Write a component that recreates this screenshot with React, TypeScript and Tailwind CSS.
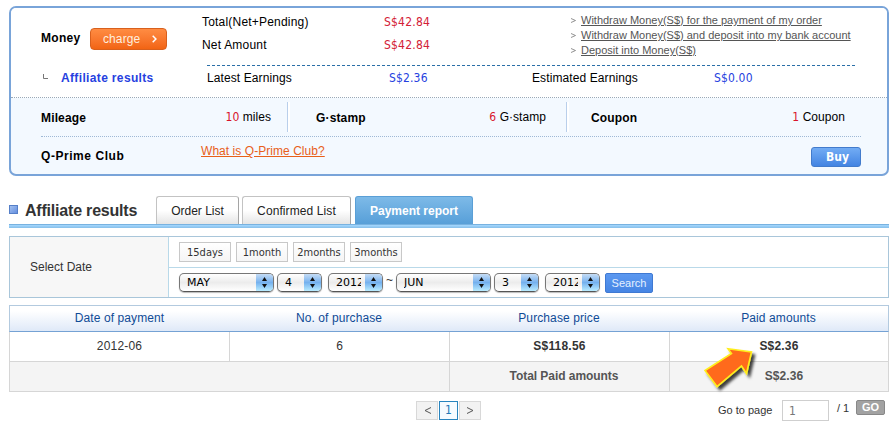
import type { ReactNode } from 'react';

const tahoma = "font-['DejaVu_Sans_Condensed','DejaVu_Sans',sans-serif]";

function MacSelect({ value, className }: { value: string; className: string }) {
  return (
    <div className={`flex h-[19px] overflow-hidden rounded-[5px] border border-[#777] border-b-[#555] bg-linear-to-b from-white via-[#ececec] to-white shadow-[0_1px_1px_#bbb] ${className}`}>
      <span className="mr-[4px] ml-[7px] min-w-0 flex-1 overflow-hidden font-['DejaVu_Sans',sans-serif] text-[11px] leading-[17px] whitespace-nowrap text-black">
        {value}
      </span>
      <span className="flex w-[17px] shrink-0 items-center justify-center bg-linear-to-b from-[#c5dcf5] via-[#75b1ee] to-[#b9ecff]">
        <svg width="7" height="11" viewBox="0 0 7 11" fill="#111">
          <path d="M3.5 0 6 4H1zM3.5 11 1 7h5z" />
        </svg>
      </span>
    </div>
  );
}

function Tab({ children, active, className }: { children: ReactNode; active?: boolean; className: string }) {
  return (
    <div
      className={`h-7 rounded-t-[3px] border border-b-0 text-center text-[12px] leading-[29px] whitespace-nowrap ${
        active
          ? 'border-[#5a9fd6] bg-linear-to-b from-[#7dbae8] to-[#579fd8] font-bold text-white'
          : 'border-[#c3c3c3] border-r-[#a5a5a5] bg-linear-to-b from-white from-50% to-[#e5e5e5] text-[#222]'
      } ${className}`}
    >
      {children}
    </div>
  );
}

function MoneyLink({ children }: { children: ReactNode }) {
  return (
    <li className="flex h-[15px] items-center">
      <svg className="mr-[5px]" width="5" height="5" viewBox="0 0 5 5" fill="none" stroke="#777" strokeWidth="0.8">
        <path d="M0 .5 4.5 2.5 0 4.5" />
      </svg>
      <a className="text-[11px] leading-[15px] whitespace-nowrap text-[#555] underline underline-offset-1">{children}</a>
    </li>
  );
}

function Stat({ label, count, unit, className }: { label: string; count: string; unit: string; className: string }) {
  return (
    <div className={`flex h-[30px] items-center justify-between ${className}`}>
      <span className="pt-[2px] text-[12px] font-bold tracking-[0.15px]">{label}</span>
      <span className="text-[12px] tracking-[0.05px]">
        <span className={`text-[#d8142d] ${tahoma}`}>{count}</span> {unit}
      </span>
    </div>
  );
}

function SummaryBox() {
  return (
    <section className="flex h-[170px] flex-col rounded-[7px] border-2 border-[#79a4d9] bg-[#f3f9ff] text-black">
      <div className="flex h-[90px] rounded-t-[5px] border-b border-dotted border-[#9aa9b8] bg-white pl-[30px]">
        <div className="w-[161px]">
          <div className="mt-[20px] flex h-[22px] items-center">
            <span className="w-[49px] pb-[2px] text-[12px] font-bold tracking-[0.3px]">Money</span>
            <button className="flex h-[22px] w-[77px] items-center justify-between rounded-[4px] border border-[#d8601d] bg-linear-to-b from-[#ff8c42] to-[#f26412] pr-[9px] pl-[12px] text-[12px] tracking-[0.1px] text-[#ffeede]">
              charge
              <svg width="5" height="8" viewBox="0 0 5 8" fill="none" stroke="#fff" strokeWidth="1.5">
                <path d="m.7.7 3.2 3.3L.7 7.3" />
              </svg>
            </button>
          </div>
          <div className="mt-[19px] flex h-[18px] items-center">
            <svg className="mb-[3px] ml-[2px]" width="18" height="6" viewBox="0 0 18 6" fill="none" stroke="#777">
              <path d="M.5 0v4.5H5" />
            </svg>
            <span className="text-[12px] font-bold tracking-[0.35px] text-[#263fe0]">Affiliate results</span>
          </div>
        </div>
        <div className="w-[655px]">
          <div className="flex h-[57px]">
            <div className="w-[182px] pt-[3px] text-[12px] leading-[23px] tracking-[0.2px]">
              <p>Total(Net+Pending)</p>
              <p>Net Amount</p>
            </div>
            <div className={`w-[187px] pt-[3px] text-[12px] leading-[23px] tracking-[0.2px] text-[#d32035] ${tahoma}`}>
              <p>S$42.84</p>
              <p>S$42.84</p>
            </div>
            <ul className="pt-[5px]">
              <MoneyLink>Withdraw Money(S$) for the payment of my order</MoneyLink>
              <MoneyLink>Withdraw Money(S$) and deposit into my bank account</MoneyLink>
              <MoneyLink>Deposit into Money(S$)</MoneyLink>
            </ul>
          </div>
          <div className="ml-[5px] h-px bg-[repeating-linear-gradient(90deg,#2a6fa8_0_3px,transparent_3px_5px)]" />
          <div className="ml-[5px] flex h-[24px] items-center text-[12px] tracking-[0.1px]">
            <span className="w-[182px]">Latest Earnings</span>
            <span className={`w-[143px] pb-px tracking-[0.15px] text-[#263fe0] ${tahoma}`}>S$2.36</span>
            <span className="w-[182px]">Estimated Earnings</span>
            <span className={`pb-px tracking-[0.15px] text-[#263fe0] ${tahoma}`}>S$0.00</span>
          </div>
        </div>
      </div>
      <div className="mr-[26px] ml-[30px] flex h-[39px] items-center border-b border-dotted border-[#9fb9d6]">
        <Stat label="Mileage" count="10" unit="miles" className="w-[246px] pr-[16px]" />
        <Stat label="G·stamp" count="6" unit="G·stamp" className="w-[279px] border-l border-[#b9cfeb] pr-[20px] pl-[28px] shadow-[inset_2px_0_#fff]" />
        <Stat label="Coupon" count="1" unit="Coupon" className="flex-1 border-l border-[#b9cfeb] pr-[16px] pl-[24px] shadow-[inset_2px_0_#fff]" />
      </div>
      <div className="mr-[26px] ml-[30px] flex items-start">
        <span className="w-[160px] pt-[10px] text-[12px] leading-[18px] font-bold tracking-[0.6px]">
          <span className="tracking-[0.55px]">Q-Prime Club</span>
        </span>
        <a className="flex-1 pt-[5px] text-[12px] leading-[18px] tracking-[0.05px] text-[#e8601a] underline underline-offset-1">What is Q-Prime Club?</a>
        <button className="mt-[10px] h-5 w-[50px] rounded-[3px] border border-[#427bcc] bg-linear-to-b from-[#72acf4] to-[#4384e2] pl-[3px] font-['DejaVu_Sans_Condensed','DejaVu_Sans',sans-serif] text-[12px] leading-[18px] font-bold text-white">
          Buy
        </button>
      </div>
    </section>
  );
}

function DateFilter() {
  return (
    <section className="mt-2 flex h-[62px] border border-[#a9c6da]">
      <div className="w-[159px] border-r border-[#b9d9e9] bg-[#f7f7f7] pl-5 text-[12px] leading-[60px]">Select Date</div>
      <div className="flex-1">
        <div className="flex h-[31px] gap-[5px] border-b border-[#b9d9e9] pt-[5px] pl-[10px]">
          {['15days', '1month', '2months', '3months'].map((range) => (
            <button key={range} className={`h-5 w-[52px] border border-[#c8c8c8] bg-linear-to-b from-white to-[#f5f5f5] text-[11px] leading-[20px] whitespace-nowrap text-[#333] ${tahoma}`}>
              {range}
            </button>
          ))}
        </div>
        <div className="flex h-[29px] items-start pt-[5px] pl-[10px]">
          <MacSelect value="MAY" className="w-[95px]" />
          <MacSelect value="4" className="ml-[3px] w-[45px]" />
          <MacSelect value="2012" className="ml-[6px] w-[55px]" />
          <span className="w-[13px] text-center text-[12px] leading-[15px]">~</span>
          <MacSelect value="JUN" className="w-[95px]" />
          <MacSelect value="3" className="ml-[3px] w-[45px]" />
          <MacSelect value="2012" className="ml-[6px] w-[55px]" />
          <button className="ml-[5px] h-5 w-[48px] rounded-[2px] border border-[#3f79d2] bg-linear-to-b from-[#5b98f0] to-[#4585e4] text-[11px] leading-[18px] text-[#e4f0ff]">
            Search
          </button>
        </div>
      </div>
    </section>
  );
}

function PaymentTable() {
  return (
    <section className="mt-[7px] text-center text-[12px]">
      <div className="grid h-[27px] grid-cols-[219px_220px_220px_219px] border border-b-[#75a2d4] border-[#b3cadf] bg-linear-to-b from-white from-20% to-[#dfe9f8] leading-[25px] tracking-[0.1px] text-[#104b96]">
        <span>Date of payment</span>
        <span>No. of purchase</span>
        <span>Purchase price</span>
        <span>Paid amounts</span>
      </div>
      <div className="grid h-[30px] grid-cols-[220px_220px_220px_218px] divide-x divide-[#d6d6d6] border-x border-b border-[#d6d6d6] leading-[28px]">
        <span className="tracking-[0.2px]">2012-06</span>
        <span>6</span>
        <span className="tracking-[0.2px] font-bold">S$118.56</span>
        <span className="tracking-[0.2px] font-bold">S$2.36</span>
      </div>
      <div className="grid h-[30px] grid-cols-[440px_220px_218px] divide-x divide-[#d6d6d6] border-x border-b border-[#d6d6d6] bg-[#f4f4f4] leading-[29px] font-bold text-[#555]">
        <span />
        <span className="pl-[9px] tracking-[-0.05px]">Total Paid amounts</span>
        <span className="pl-[10px] tracking-[0.1px]">S$2.36</span>
      </div>
    </section>
  );
}

function Pager() {
  return (
    <footer className="flex pt-[8px]">
      <div className="mt-px ml-[407px] flex w-[302px] gap-px text-center text-[12px] leading-[17px]">
        <span className="flex h-[19px] w-[22px] items-center justify-center border border-[#d8d8d8] bg-[#f2f2f2]">
          <svg width="7" height="7" viewBox="0 0 7 7" fill="none" stroke="#555">
            <path d="M7 .5 1 3.5l6 3" />
          </svg>
        </span>
        <span className={`h-[19px] w-[19px] border border-[#2884be] bg-[#f6fbff] text-[#2479b7] ${tahoma}`}>1</span>
        <span className="flex h-[19px] w-[22px] items-center justify-center border border-[#d8d8d8] bg-[#f2f2f2]">
          <svg width="7" height="7" viewBox="0 0 7 7" fill="none" stroke="#555">
            <path d="m0 .5 6 3-6 3" />
          </svg>
        </span>
      </div>
      <span className="w-[64px] pt-[2px] text-[11px] leading-[16px] whitespace-nowrap">Go to page</span>
      <span className={`h-[21px] w-[47px] border border-[#cfcfcf] pl-[6px] text-[12px] leading-[21px] text-[#777] ${tahoma}`}>1</span>
      <span className="w-[27px] pt-px pl-[8px] text-[11px] leading-[15px]">/ 1</span>
      <button className="h-[15px] w-[29px] rounded-[2px] border border-[#888] bg-[#a2a2a2] text-[11px] leading-[13px] font-bold text-white">GO</button>
    </footer>
  );
}

export default function App() {
  return (
    <div className="relative h-[432px] w-[896px] overflow-hidden bg-white pt-[6px] pr-[7px] pl-[9px] font-['Liberation_Sans',Arial,sans-serif] text-[#333]">
      <SummaryBox />
      <div className="mt-5 flex h-7">
        <span className="mt-[9px] mr-[7px] h-[9px] w-[9px] border border-[#557fc8] bg-linear-to-br from-[#a3c0ee] to-[#658fe0]" />
        <h2 className="w-[131px] text-[16px] leading-[29px] font-bold tracking-[-0.2px] whitespace-nowrap">Affiliate results</h2>
        <Tab className="w-[83px]">Order List</Tab>
        <Tab className="ml-[3px] w-[109px] tracking-[0.1px]">Confirmed List</Tab>
        <Tab active className="ml-[4px] w-[118px]">Payment report</Tab>
      </div>
      <div className="h-1 border-t border-[#78b2e0] bg-linear-to-b from-[#a5d8ff] to-[#87bfe9]" />
      <DateFilter />
      <PaymentTable />
      <Pager />
      <svg className="absolute top-[340px] left-[698px]" width="64" height="56" viewBox="698 340 64 56">
        <defs>
          <filter id="arrow-shadow" x="-20%" y="-20%" width="150%" height="150%">
            <feDropShadow dx="3" dy="3" stdDeviation="1.6" floodColor="#000" floodOpacity="0.75" />
          </filter>
        </defs>
        <path
          d="M705 370.5 731.5 353.5 728 348.8 751.5 352 746.5 373.5 741.5 366 717 386.5z"
          fill="#ff6a1f"
          stroke="#ffee1f"
          strokeWidth="1.6"
          filter="url(#arrow-shadow)"
        />
      </svg>
    </div>
  );
}
